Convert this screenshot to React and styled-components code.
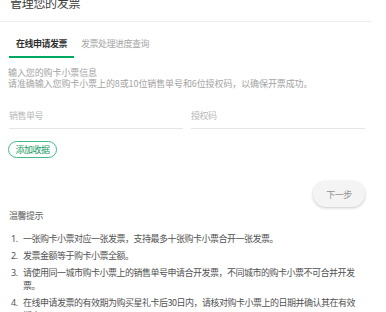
import React from "react";
import styled, { createGlobalStyle } from "styled-components";

const GlobalStyle = createGlobalStyle`
  html, body {
    margin: 0;
    padding: 0;
    background: #ffffff;
    overflow: hidden;
  }
  body {
    font-family: "Noto Sans", "Noto Sans CJK SC", sans-serif;
    -webkit-font-smoothing: antialiased;
  }
`;

const Page = styled.div`
  width: 386px;
  height: 312px;
  overflow: hidden;
`;

const Header = styled.header`
  width: 371px;
  padding: 0 0 12px 10px;
  box-sizing: border-box;
  border-bottom: 1px solid #ececec;
  margin-top: -3px;
`;

const Title = styled.h1`
  margin: 0;
  font-size: 12px;
  line-height: 12px;
  letter-spacing: -0.3px;
  font-weight: 400;
  color: #3a3a3a;
  font-family: "Noto Sans CJK SC", sans-serif;
`;

const Main = styled.main`
  padding: 0 21px 0 8px;
`;

const Tabs = styled.nav`
  display: flex;
  margin-top: 16px;
  padding-left: 1px;
`;

const Tab = styled.div`
  padding: 0 7px 6px;
  font-size: 9px;
  letter-spacing: -0.5px;
  line-height: 12px;
  font-family: "Noto Sans CJK SC", sans-serif;
  font-weight: ${(p) => (p.$active ? 700 : 400)};
  color: ${(p) => (p.$active ? "#2f2f2f" : "#a6a6a6")};
  border-bottom: 2px solid ${(p) => (p.$active ? "#00a862" : "transparent")};
`;

const Info = styled.p`
  margin: 9px 0 0;
  font-size: 9px;
  letter-spacing: -0.1px;
  line-height: 11px;
  color: #a3a3a3;
  font-family: "Noto Sans CJK SC", sans-serif;
`;

const Fields = styled.div`
  display: grid;
  grid-template-columns: 1fr 1fr;
  gap: 8px;
  margin-top: 20px;
  padding-left: 1px;
`;

const Field = styled.input`
  border: none;
  border-bottom: 1px solid #e6e6e6;
  padding: 0 0 7px;
  font-size: 9px;
  letter-spacing: -0.5px;
  line-height: 12px;
  height: 20px;
  box-sizing: border-box;
  font-family: "Noto Sans CJK SC", sans-serif;
  color: #333;
  outline: none;
  background: transparent;
  &::placeholder {
    color: #b8b8b8;
  }
`;

const AddButton = styled.button`
  display: block;
  margin-top: 12px;
  height: 17px;
  padding: 0 6.5px;
  border: 1px solid #41b987;
  border-radius: 9px;
  background: #ffffff;
  color: #139a5f;
  font-size: 9px;
  letter-spacing: -0.5px;
  line-height: 15px;
  font-family: "Noto Sans CJK SC", sans-serif;
`;

const Actions = styled.div`
  display: flex;
  justify-content: flex-end;
  margin-top: 23px;
`;

const NextButton = styled.button`
  width: 52px;
  height: 26px;
  border: none;
  border-radius: 13px;
  background: #f4f4f4;
  box-shadow: 0 1px 3px rgba(0, 0, 0, 0.22);
  color: #929292;
  font-size: 9px;
  letter-spacing: -0.5px;
  font-family: "Noto Sans CJK SC", sans-serif;
`;

const NoticeTitle = styled.h2`
  margin: 3px 0 0 1px;
  font-size: 9px;
  letter-spacing: -0.5px;
  line-height: 12px;
  font-weight: 400;
  color: #5e5e5e;
  font-family: "Noto Sans CJK SC", sans-serif;
`;

const List = styled.ol`
  list-style: none;
  margin: 10px -4px 0 0;
  padding: 0;
`;

const Item = styled.li`
  display: flex;
  margin-bottom: 4px;
  font-size: 9px;
  letter-spacing: -0.5px;
  line-height: 13px;
  color: #525252;
  font-family: "Noto Sans", "Noto Sans CJK SC", sans-serif;
`;

const Num = styled.span`
  flex: none;
  width: 12px;
  padding-left: 3px;
`;

const Text = styled.span`
  flex: 1;
  font-family: "Noto Sans CJK SC", sans-serif;
`;

const notices = [
  "一张购卡小票对应一张发票，支持最多十张购卡小票合开一张发票。",
  "发票金额等于购卡小票全额。",
  "请使用同一城市购卡小票上的销售单号申请合开发票，不同城市的购卡小票不可合并开发票。",
  "在线申请发票的有效期为购买星礼卡后30日内，请核对购卡小票上的日期并确认其在有效期\u2060内。",
];

export default function App() {
  return (
    <Page>
      <GlobalStyle />
      <Header>
        <Title>管理您的发票</Title>
      </Header>
      <Main>
        <Tabs>
          <Tab $active>在线申请发票</Tab>
          <Tab>发票处理进度查询</Tab>
        </Tabs>
        <Info>
          输入您的购卡小票信息
          <br />
          请准确输入您购卡小票上的8或10位销售单号和6位授权码，以确保开票成功。
        </Info>
        <Fields>
          <Field placeholder="销售单号" />
          <Field placeholder="授权码" />
        </Fields>
        <AddButton>添加收据</AddButton>
        <Actions>
          <NextButton>下一步</NextButton>
        </Actions>
        <NoticeTitle>温馨提示</NoticeTitle>
        <List>
          {notices.map((n, i) => (
            <Item key={i}>
              <Num>{i + 1}.</Num>
              <Text>{n}</Text>
            </Item>
          ))}
        </List>
      </Main>
    </Page>
  );
}
